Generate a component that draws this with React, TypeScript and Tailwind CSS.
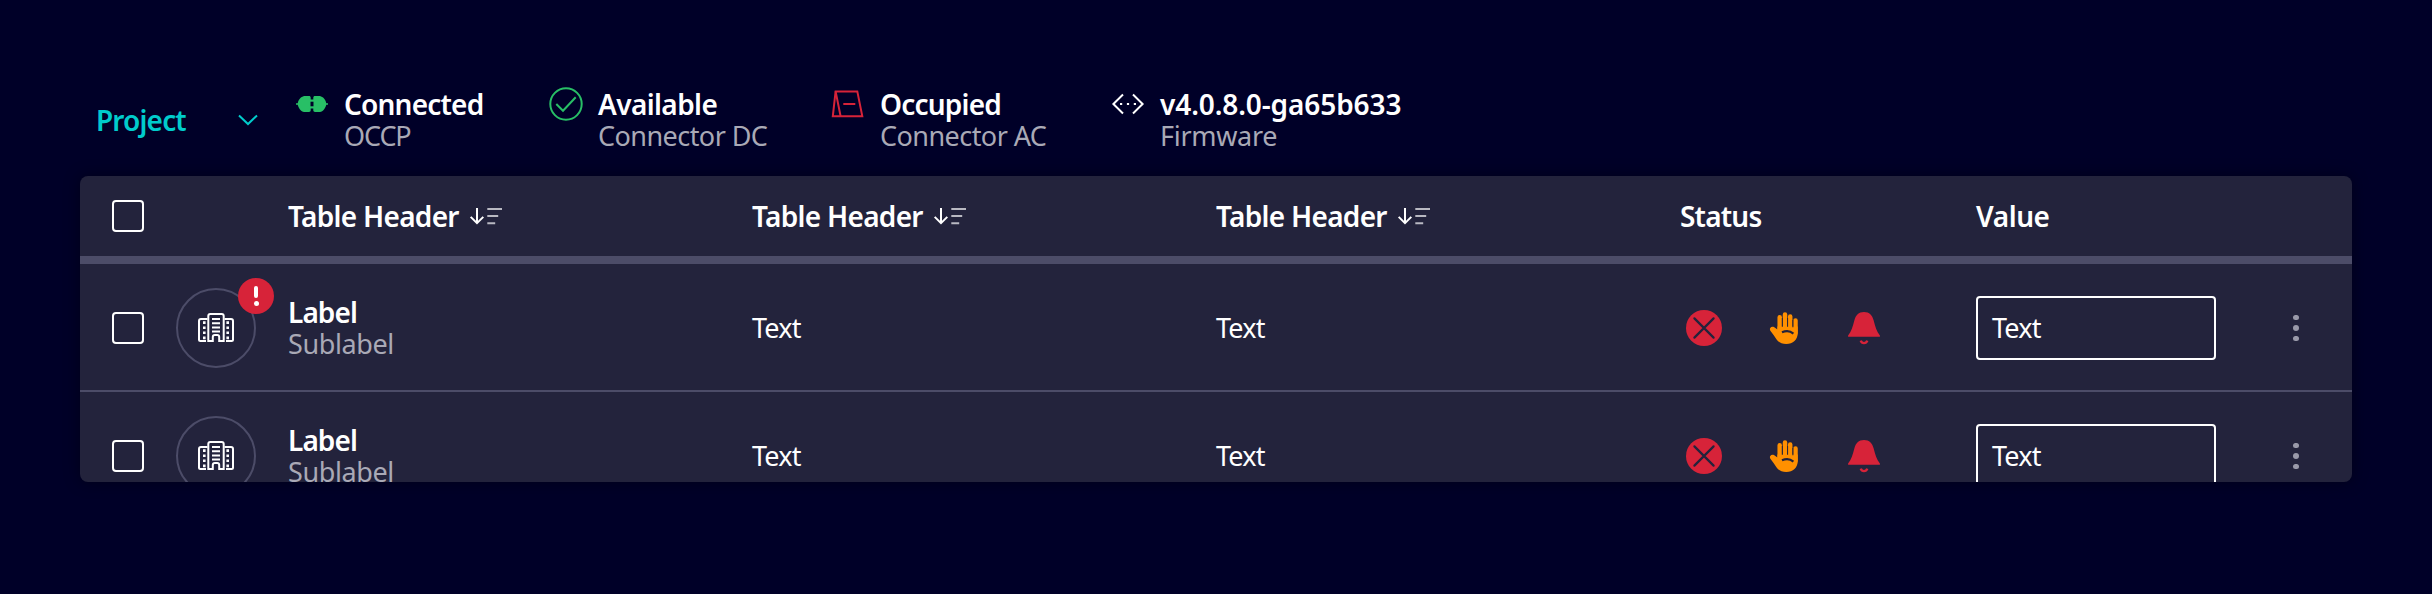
import type { ReactNode } from "react";

function PlugIcon() {
  return (
    <svg width="48" height="48" viewBox="0 0 48 48" fill="#28bf66" className="shrink-0">
      <path d="M8 23.2h1.7c.5-2.2 1.6-4.200 3.200-5.600 1.300-1.100 2.700-1.600 4.400-1.600h3.700c1 0 1.700.7 1.700 1.700v1.800h2.600v-1.800c0-1 .7-1.700 1.700-1.700h3.700c1.700 0 3.100.5 4.400 1.600 1.600 1.400 2.700 3.400 3.200 5.600H40v1.600h-1.700c-.5 2.200-1.600 4.200-3.200 5.600-1.300 1.100-2.700 1.600-4.400 1.600H27c-1 0-1.700-.7-1.700-1.700v-1.800h-2.600v1.800c0 1-.7 1.700-1.700 1.700h-3.700c-1.700 0-3.100-.5-4.400-1.600-1.600-1.400-2.700-3.400-3.200-5.600H8z" />
      <path d="M22.500 21.700h3v4.600h-3z" fill="#000028" />
    </svg>
  );
}

function CheckCircleIcon() {
  return (
    <svg width="48" height="48" viewBox="0 0 48 48" fill="none" stroke="#28bf66" strokeWidth="2" className="shrink-0">
      <circle cx="24" cy="24" r="15.700" />
      <path d="m14.300 24 6.700 6.700L33.700 17.300" />
    </svg>
  );
}

function OccupiedIcon() {
  return (
    <svg width="48" height="48" viewBox="0 0 48 48" fill="none" stroke="#d72339" strokeWidth="2" className="shrink-0">
      <path d="M12.500 36.300H8.800L11.600 11.400h21.700l5 24.900H16.600z" />
      <path d="M11.600 11.400 16.600 36.300M19.300 24h12" />
    </svg>
  );
}

function FirmwareIcon() {
  return (
    <svg width="48" height="48" viewBox="0 0 48 48" fill="none" stroke="#fff" strokeWidth="2" className="shrink-0">
      <path d="M19 14.500 9.400 24l9.600 9.500M29 14.500l9.600 9.500-9.600 9.500" />
      <path d="M16 23h2.200v2H16zM22.900 23h2.200v2h-2.200zM29.800 23H32v2h-2.200z" fill="#fff" stroke="none" />
    </svg>
  );
}

function SortIcon() {
  return (
    <svg width="36" height="24" viewBox="0 0 36 24" fill="none" strokeWidth="2" className="shrink-0">
      <path d="M9 4v15M2.700 12.900 9 19.200l6.300-6.300" stroke="#fff" />
      <path d="M19.300 5H34M19.300 12h10.900M19.300 19.200h7.900" stroke="#b9b9c2" />
    </svg>
  );
}

function BuildingIcon() {
  return (
    <svg width="36" height="30" viewBox="0 0 36 30" fill="none" stroke="#fff" strokeWidth="2">
      <path d="M10.300 28V3q0-2 2-2h11.400q2 0 2 2v25h-4.500v-4q0-2-2-2h-2.400q-2 0-2 2v4z" />
      <path d="M9.500 6H3Q1 6 1 8v18.500q0 1.500 1.500 1.500H8M26.500 6H33q2 0 2 2v18.500q0 1.500-1.500 1.500H28" />
      <path d="M14 6h8M14 10.200h8M14 14.400h8M14 18.600h8" />
      <path d="M6.300 8.300v18M29.700 8.300v18" strokeWidth="2.600" strokeDasharray="2.600 2.500" />
    </svg>
  );
}

function FaultIcon() {
  return (
    <svg width="48" height="48" viewBox="0 0 48 48">
      <circle cx="24" cy="24" r="18" fill="#d72339" />
      <path d="m14.400 14.400 19.200 19.200m0-19.200L14.400 33.600" stroke="#23233c" strokeWidth="2.200" strokeLinecap="round" />
    </svg>
  );
}

function HandIcon() {
  return (
    <svg width="48" height="48" viewBox="-2 0 48 48" fill="none">
      <g stroke="#ff9000" strokeWidth="4.500" strokeLinecap="round">
        <path d="M17.700 13.300V28M23 10.400V28M28.200 12.500V28M33.500 16.600V29" />
      </g>
      <path d="M15.400 25.500V22.500h20.300v6.800c0 6.400-4.700 10.700-11.400 10.700-4.700 0-7.600-1.500-9.900-4.800-1.900-2.800-3.400-5.300-5.300-7.500-1.200-1.400-1.600-2.700-.8-3.800.8-1.200 2.500-1.400 4-.6z" fill="#ff9000" />
      <path d="M20.300 14v8.700M25.600 14v8.700M30.900 16v7.300" stroke="#23233c" strokeWidth=".9" />
      <path d="M20 28.300c4-1.800 8.300-1.400 11.400 1.300" stroke="#23233c" strokeWidth="2.200" />
    </svg>
  );
}

function BellIcon() {
  return (
    <svg width="48" height="48" viewBox="0 0 48 48" fill="none">
      <path d="M24 8c5.500 0 8.200 3.200 9.600 8.200 1.700 6.200 2.900 11.300 6.300 15.200v1.400H8.100v-1.400c3.400-3.900 4.600-9 6.300-15.200C15.800 11.200 18.500 8 24 8z" fill="#d72339" />
      <path d="M20.700 36.600c1.300 3.400 5.300 3.400 6.600 0" stroke="#d72339" strokeWidth="2.400" />
    </svg>
  );
}

function Checkbox() {
  return <div className="ml-8 h-8 w-8 shrink-0 rounded border-2 border-white" />;
}

const strong = "font-semibold text-white";
const muted = "text-[27px] text-[#a9a9b6]";
const cell = "text-[27px] tracking-[-0.75px] text-white";

type InfoProps = {
  icon: ReactNode;
  title: string;
  sub: string;
  className?: string;
  titleClass: string;
  subClass: string;
};

function Info({ icon, title, sub, className = "", titleClass, subClass }: InfoProps) {
  return (
    <div className={`flex shrink-0 items-start gap-2 ${className}`}>
      {icon}
      <div className="pt-[7.500px] leading-8 whitespace-nowrap">
        <div className={`${strong} ${titleClass}`}>{title}</div>
        <div className={`${muted} ${subClass}`}>{sub}</div>
      </div>
    </div>
  );
}

function SortHeader() {
  return (
    <div className={`flex w-[464px] shrink-0 items-center gap-[9px] tracking-[-0.7px] ${strong}`}>
      Table Header
      <SortIcon />
    </div>
  );
}

function Row({ alert = false }: { alert?: boolean }) {
  return (
    <div className="flex h-32 shrink-0 items-center border-b-2 border-[#4c4c68] pt-0.5">
      <Checkbox />
      <div className="relative ml-8 flex h-20 w-20 shrink-0 items-center justify-center rounded-full border-2 border-[#4c4c68]">
        <BuildingIcon />
        {alert && (
          <div className="absolute -top-3 -right-5 flex h-9 w-9 flex-col items-center justify-center gap-[3px] rounded-full bg-[#d72339]">
            <div className="h-3 w-1 rounded-full bg-white" />
            <div className="h-[5px] w-[5px] rounded-full bg-white" />
          </div>
        )}
      </div>
      <div className="ml-8 w-[464px] shrink-0 leading-8">
        <div className={`tracking-[-0.9px] ${strong}`}>Label</div>
        <div className={`tracking-[-0.4px] ${muted}`}>Sublabel</div>
      </div>
      <div className={`w-[464px] shrink-0 ${cell}`}>Text</div>
      <div className={`w-[464px] shrink-0 ${cell}`}>Text</div>
      <div className="flex w-[296px] shrink-0 gap-8">
        <FaultIcon />
        <HandIcon />
        <BellIcon />
      </div>
      <div className={`flex h-16 w-60 shrink-0 items-center rounded border-2 border-white px-3.5 ${cell}`}>Text</div>
      <div className="ml-[77px] flex flex-col gap-[5px]">
        <div className="h-[5.500px] w-[5.500px] rounded-full bg-[#9999a9]" />
        <div className="h-[5.500px] w-[5.500px] rounded-full bg-[#9999a9]" />
        <div className="h-[5.500px] w-[5.500px] rounded-full bg-[#9999a9]" />
      </div>
    </div>
  );
}

export default function App() {
  return (
    <div className="h-[594px] w-[2432px] overflow-hidden bg-[#000028] px-20 pt-20 font-['Noto_Sans',sans-serif] text-[28px] leading-8">
      <div className="flex h-24 items-start">
        <div className="flex h-20 w-[208px] shrink-0 items-center justify-between pr-[30px] pl-4 font-semibold tracking-[-0.85px] text-[#00cccc]">
          Project
          <svg width="20" height="12" viewBox="0 0 20 12" fill="none" stroke="#00cccc" strokeWidth="2">
            <path d="m1 1.500 9 8.500 9-8.500" />
          </svg>
        </div>
        <Info icon={<PlugIcon />} title="Connected" sub="OCCP" className="w-[254px]" titleClass="tracking-[-0.8px]" subClass="tracking-[-1.1px]" />
        <Info icon={<CheckCircleIcon />} title="Available" sub="Connector DC" className="w-[282px]" titleClass="tracking-[-0.6px]" subClass="tracking-[-0.55px]" />
        <Info icon={<OccupiedIcon />} title="Occupied" sub="Connector AC" className="w-[280px]" titleClass="tracking-[-0.8px]" subClass="tracking-[-0.55px]" />
        <Info icon={<FirmwareIcon />} title="v4.0.8.0-ga65b633" sub="Firmware" titleClass="tracking-[-0.1px]" subClass="tracking-[-0.3px]" />
      </div>
      <div className="flex h-[306px] flex-col overflow-hidden rounded-lg bg-[#23233c] shadow-[0_0_16px_rgba(0,0,0,0.4)]">
        <div className="flex h-[88px] shrink-0 items-center border-b-8 border-[#4c4c68]">
          <Checkbox />
          <div className="w-36 shrink-0" />
          <SortHeader />
          <SortHeader />
          <SortHeader />
          <div className={`w-[296px] shrink-0 tracking-[-0.8px] ${strong}`}>Status</div>
          <div className={`tracking-[-0.42px] ${strong}`}>Value</div>
        </div>
        <Row alert />
        <Row />
      </div>
    </div>
  );
}
